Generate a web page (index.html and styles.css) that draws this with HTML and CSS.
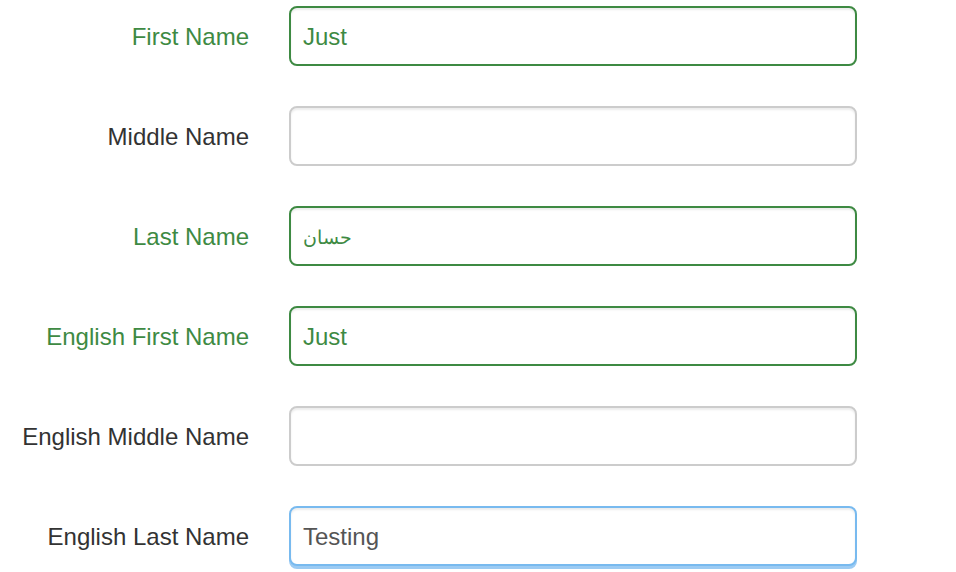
FILE: index.html
```html
<!DOCTYPE html>
<html>
<head>
<meta charset="utf-8">
<link rel="stylesheet" href="styles.css">
</head>
<body>
<form class="form">
  <div class="row success">
    <label class="label">First Name</label>
    <input class="input" type="text" value="Just">
  </div>
  <div class="row">
    <label class="label">Middle Name</label>
    <input class="input" type="text" value="">
  </div>
  <div class="row success">
    <label class="label">Last Name</label>
    <input class="input arabic" type="text" value="حسان">
  </div>
  <div class="row success">
    <label class="label">English First Name</label>
    <input class="input" type="text" value="Just">
  </div>
  <div class="row">
    <label class="label">English Middle Name</label>
    <input class="input" type="text" value="">
  </div>
  <div class="row">
    <label class="label">English Last Name</label>
    <input class="input focus" type="text" value="Testing">
  </div>
</form>
</body>
</html>
```

FILE: styles.css
```css
html, body {
  margin: 0;
  padding: 0;
  background: #fff;
}
body {
  font-family: "Liberation Sans", Arial, sans-serif;
  font-size: 24px;
  color: #333;
  width: 956px;
  height: 572px;
  overflow: hidden;
}
.form {
  display: flex;
  flex-direction: column;
  padding-top: 6px;
  gap: 40px;
}
.row {
  display: flex;
  align-items: center;
  gap: 40px;
  height: 60px;
}
.label {
  width: 249px;
  text-align: right;
  color: #333;
  font-size: 24px;
  padding-top: 2px;
}
.input {
  box-sizing: border-box;
  width: 568px;
  height: 60px;
  border: 2px solid #ccc;
  border-radius: 8px;
  padding: 2px 12px 0;
  font-family: "Liberation Sans", Arial, sans-serif;
  font-size: 24px;
  color: #555;
  background: #fff;
  box-shadow: inset 0 2px 2px rgba(0,0,0,0.075);
  outline: none;
}
.input.arabic {
  font-size: 19px;
}
.success .label {
  color: #3e8a43;
}
.success .input {
  border-color: #3e8a43;
  color: #3e8a43;
}
.input.focus {
  border-color: #78baef;
  box-shadow: inset 0 2px 2px rgba(0,0,0,0.075), 0 3px 0 #9ccbf3;
}
```
